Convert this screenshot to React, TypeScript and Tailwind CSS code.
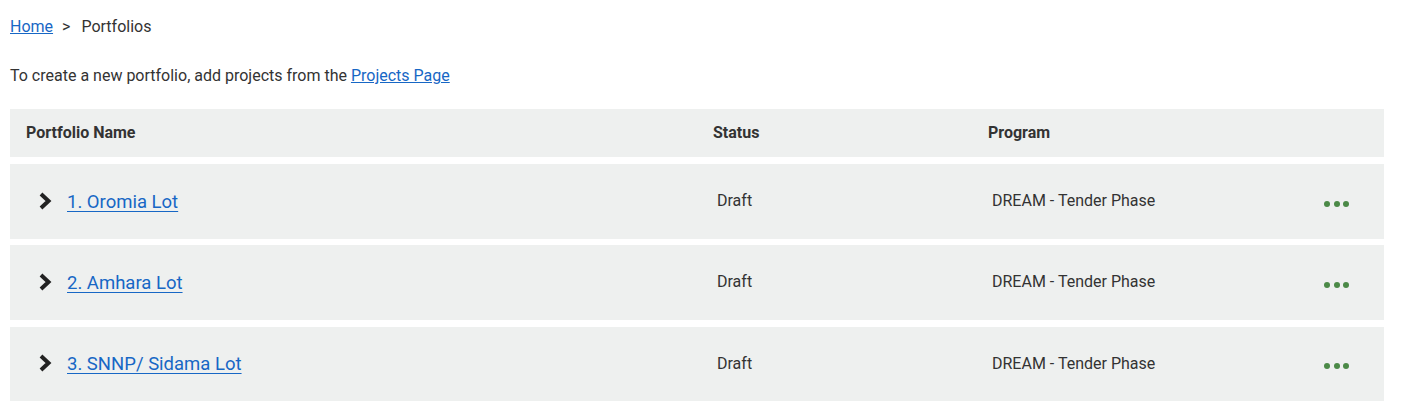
import React from "react";

const rows = [
  { name: "1. Oromia Lot", status: "Draft", program: "DREAM - Tender Phase", cls: "h-[75px]" },
  { name: "2. Amhara Lot", status: "Draft", program: "DREAM - Tender Phase", cls: "h-[75px] mt-[6px]" },
  { name: "3. SNNP/ Sidama Lot", status: "Draft", program: "DREAM - Tender Phase", cls: "h-[74px] mt-[7px]" },
];

function Chevron() {
  return (
    <svg width="14" height="20" viewBox="0 0 14 20" className="shrink-0 -mt-[2px]">
      <polyline points="3,3 10.5,10 3,17" fill="none" stroke="#222222" strokeWidth="4" strokeLinecap="butt" strokeLinejoin="miter" />
    </svg>
  );
}

function Dots() {
  return (
    <div className="flex items-center gap-[3.5px]">
      <span className="block w-[6px] h-[6px] rounded-full bg-[#4b8a47]" />
      <span className="block w-[6px] h-[6px] rounded-full bg-[#4b8a47]" />
      <span className="block w-[6px] h-[6px] rounded-full bg-[#4b8a47]" />
    </div>
  );
}

export default function App() {
  return (
    <div className="bg-white min-h-[408px] pl-[10px] pr-[24px] pt-[15px] text-[#333333]" style={{ fontFamily: "Roboto, 'Noto Sans', sans-serif" }}>
      <div className="flex items-center h-[24px] text-[16px] leading-[24px]">
        <a href="#" className="text-[#1767c5] underline">Home</a>
        <span className="ml-[9px] mr-[11px]">&gt;</span>
        <span>Portfolios</span>
      </div>
      <div className="mt-[25px] h-[24px] text-[16px] leading-[24px]">
        To create a new portfolio, add projects from the{" "}
        <a href="#" className="text-[#1767c5] underline">Projects Page</a>
      </div>
      <div className="mt-[21px] w-[1374px]">
        <div className="flex items-center h-[48px] bg-[#eef0ef] font-bold text-[16px]">
          <div className="w-[703px] pl-[16px]">Portfolio Name</div>
          <div className="w-[275px]">Status</div>
          <div>Program</div>
        </div>
        <div className="mt-[7px] flex flex-col">
          {rows.map((r) => (
            <div key={r.name} className={`flex items-center bg-[#eef0ef] text-[16px] ${r.cls}`}>
              <div className="w-[707px] pl-[28px] flex items-center gap-[15px]">
                <Chevron />
                <a href="#" className="mt-[2px] text-[18.5px] text-[#1767c5] underline underline-offset-[3px]">{r.name}</a>
              </div>
              <div className="w-[275px] -mt-[1px]">{r.status}</div>
              <div className="flex-1 -mt-[1px]">{r.program}</div>
              <div className="pr-[35px] pt-[4px]">
                <Dots />
              </div>
            </div>
          ))}
        </div>
      </div>
    </div>
  );
}
